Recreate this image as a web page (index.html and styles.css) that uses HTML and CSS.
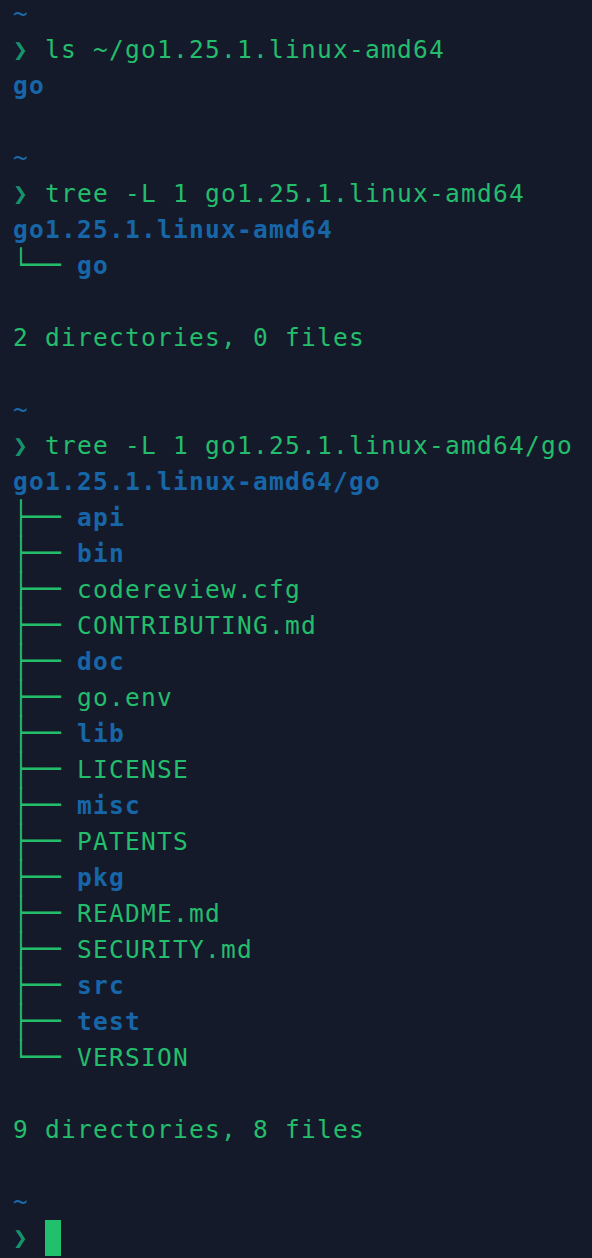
FILE: index.html
```html
<!DOCTYPE html>
<html>
<head>
<meta charset="utf-8">
<link rel="stylesheet" href="styles.css">
</head>
<body>
<div class="term">
<div class="line dir-tilde">~</div>
<div class="line"><span class="prompt">❯</span> ls ~/go1.25.1.linux-amd64</div>
<div class="line"><span class="dir">go</span></div>
<div class="line"></div>
<div class="line dir-tilde">~</div>
<div class="line"><span class="prompt">❯</span> tree -L 1 go1.25.1.linux-amd64</div>
<div class="line"><span class="dir">go1.25.1.linux-amd64</span></div>
<div class="line"><span class="tr">└──</span> <span class="dir">go</span></div>
<div class="line"></div>
<div class="line">2 directories, 0 files</div>
<div class="line"></div>
<div class="line dir-tilde">~</div>
<div class="line"><span class="prompt">❯</span> tree -L 1 go1.25.1.linux-amd64/go</div>
<div class="line"><span class="dir">go1.25.1.linux-amd64/go</span></div>
<div class="line"><span class="tr">├──</span> <span class="dir">api</span></div>
<div class="line"><span class="tr">├──</span> <span class="dir">bin</span></div>
<div class="line"><span class="tr">├──</span> codereview.cfg</div>
<div class="line"><span class="tr">├──</span> CONTRIBUTING.md</div>
<div class="line"><span class="tr">├──</span> <span class="dir">doc</span></div>
<div class="line"><span class="tr">├──</span> go.env</div>
<div class="line"><span class="tr">├──</span> <span class="dir">lib</span></div>
<div class="line"><span class="tr">├──</span> LICENSE</div>
<div class="line"><span class="tr">├──</span> <span class="dir">misc</span></div>
<div class="line"><span class="tr">├──</span> PATENTS</div>
<div class="line"><span class="tr">├──</span> <span class="dir">pkg</span></div>
<div class="line"><span class="tr">├──</span> README.md</div>
<div class="line"><span class="tr">├──</span> SECURITY.md</div>
<div class="line"><span class="tr">├──</span> <span class="dir">src</span></div>
<div class="line"><span class="tr">├──</span> <span class="dir">test</span></div>
<div class="line"><span class="tr">└──</span> VERSION</div>
<div class="line"></div>
<div class="line">9 directories, 8 files</div>
<div class="line"></div>
<div class="line dir-tilde">~</div>
<div class="line"><span class="prompt">❯</span> <span class="cursor"></span></div>
</div>
</body>
</html>
```
FILE: styles.css
```css
html, body {
  margin: 0;
  padding: 0;
  background: #151a2b;
  height: 100%;
  overflow: hidden;
}
.term {
  margin-top: -4px;
  padding-left: 13px;
  font-family: "DejaVu Sans Mono", monospace;
  font-size: 24.5px;
  letter-spacing: 1.25px;
  color: #24bd6b;
}
.line {
  height: 36px;
  line-height: 36px;
  white-space: pre;
}
.dir-tilde {
  color: #1a6bb0;
}
.prompt {
  color: #16936b;
}
.dir {
  color: #1766a8;
  font-weight: bold;
}
.tr {
  display: inline-block;
  vertical-align: top;
  font-family: "Liberation Mono", monospace;
  font-size: 26.667px;
  letter-spacing: 0;
  line-height: 36px;
  height: 36px;
  transform: scaleY(1.25);
}
.cursor {
  display: inline-block;
  width: 16px;
  height: 36px;
  vertical-align: top;
  background: #22c06d;
}
```
